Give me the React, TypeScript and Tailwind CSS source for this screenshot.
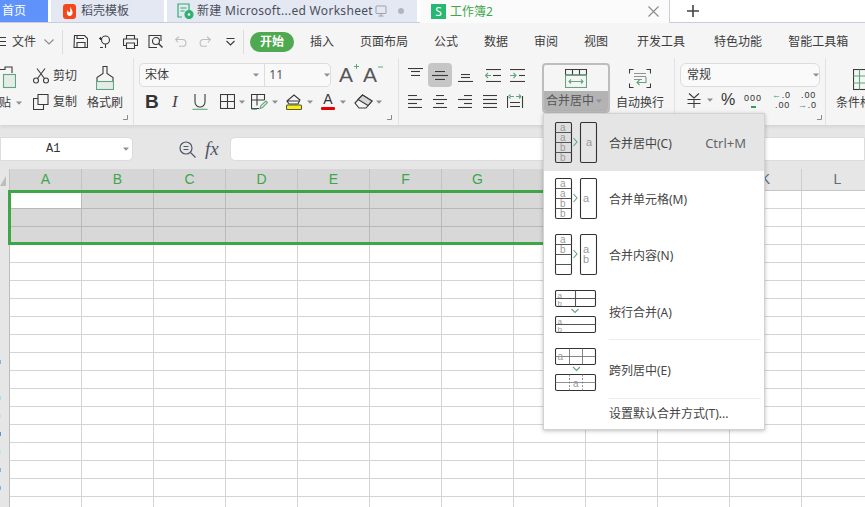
import React from "react";

const S = ({ w, h, children, className = "" }: { w: number; h: number; children?: React.ReactNode; className?: string }) => (
  <svg width={w} height={h} viewBox={`0 0 ${w} ${h}`} fill="none" stroke="#3a3a3a" strokeWidth={1.1} className={"shrink-0 block " + className}>
    {children}
  </svg>
);

const Caret = ({ className = "" }: { className?: string }) => (
  <svg width={6} height={4} viewBox="0 0 6 4" className={"shrink-0 block " + className}>
    <path d="M0 0.5h6L3 3.8z" fill="#8f8f8f" />
  </svg>
);

const Corner = () => (
  <svg width={5} height={5} viewBox="0 0 5 5" className="block">
    <path d="M4.5 0v4.5H0" fill="none" stroke="#8a8a8a" />
  </svg>
);

const Lines = ({ rows }: { rows: [number, number, number][] }) => (
  <>
    {rows.map(([x1, x2, y], i) => (
      <path key={i} d={`M${x1} ${y}H${x2}`} />
    ))}
  </>
);

const G = "#5fa67c";

function Tabs() {
  return (
    <div className="h-[23px] flex bg-white shrink-0 text-[12px] text-[#4a4f5c]">
      <div className="w-[48px] bg-[#6092fc] text-white pl-[2px] flex items-center border-b border-[#c8cedd]">首页</div>
      <div className="w-[3px] border-b border-[#c8cedd]" />
      <div className="w-[113px] bg-[#e4e8f2] flex items-center border-b border-[#c8cedd] pl-[12px]">
        <svg width={14} height={15} viewBox="0 0 14 15" className="shrink-0 block">
          <rect width={13} height={15} rx={3} fill="#f4481b" />
          <path d="M7.5 2.5C8 5.5 10 6.5 9.5 9.5C9 12 6 13 4.5 11C3.2 9.2 4 7 5 6C5 8 6 8.7 6.8 8.2C7.8 7.2 6.8 5 7.5 2.5z" fill="#fff" />
        </svg>
        <span className="ml-[4px]">稻壳模板</span>
      </div>
      <div className="w-[3px] border-b border-[#c8cedd]" />
      <div className="w-[250px] bg-[#e4e8f2] flex items-center border-b border-[#c8cedd] pl-[10px]">
        <svg width={17} height={16} viewBox="0 0 17 16" fill="none" stroke="#2db06f" strokeWidth={1.2} className="shrink-0 block">
          <path d="M5 14H1V1h11v6" />
          <path d="M3.5 5h6M3.5 8h4" />
          <circle cx={12} cy={11.5} r={4} fill="#2db06f" />
          <circle cx={12} cy={11.5} r={1.3} fill="#fff" stroke="none" />
        </svg>
        <span className="ml-[3px] whitespace-nowrap w-[178px] tracking-[0.3px]">新建 Microsoft...ed Worksheet</span>
        <svg width={12} height={12} viewBox="0 0 12 12" fill="none" stroke="#9aa0ad" className="shrink-0 block">
          <rect x={1} y={1} width={10} height={7.5} rx={0.5} />
          <path d="M6 8.5V11M3.5 11h5" />
        </svg>
        <span className="ml-[11px] w-[6px] h-[6px] rounded-full bg-[#b1b5bf]" />
      </div>
      <div className="w-[3px] border-b border-[#c8cedd]" />
      <div className="w-[250px] bg-[#fbfbfb] flex items-center pl-[11px] border-r border-[#c8cedd]">
        <div className="w-[15px] h-[15px] bg-[#27b873] text-white text-[12px] leading-[15px] text-center shrink-0">S</div>
        <span className="ml-[4px] text-[#3fa64e] text-[12px]">工作簿2</span>
        <svg width={11} height={11} viewBox="0 0 11 11" stroke="#8a8a8a" strokeWidth={1.1} className="ml-auto mr-[10px] block">
          <path d="M0.5 0.5l10 10M10.5 0.5l-10 10" />
        </svg>
      </div>
      <div className="flex-1 border-b border-[#c8cedd] pl-[17px] flex items-center">
        <svg width={12} height={12} viewBox="0 0 12 12" stroke="#444" strokeWidth={1.6} className="block">
          <path d="M6 0v12M0 6h12" />
        </svg>
      </div>
    </div>
  );
}

function MenuRow() {
  return (
    <div className="h-[35px] pt-[2px] bg-[#f5f5f5] flex items-center shrink-0 text-[12px] text-[#3c3c3c] whitespace-nowrap">
      <S w={6} h={9} className="ml-0">
        <path d="M0 0.5h6M0 4.5h6M0 8.5h6" />
      </S>
      <span className="ml-[6px] w-[24px]">文件</span>
      <S w={10} h={6} className="ml-[8px]">
        <path d="M0.5 0.5l4.5 4.5l4.5-4.5" stroke="#8b8b8b" />
      </S>
      <div className="ml-[8px] w-px h-[24px] bg-[#dcdcdc]" />
      <S w={15} h={14} className="ml-[10px]">
        <path d="M1.5 0.5h10l3 3v9h-13.500z M4 13V7.500h8V13 M4 0.500v3h7" />
      </S>
      <S w={14} h={14} className="ml-[10px]">
        <circle cx={7.5} cy={5} r={4} />
        <path d="M1 3.500h3M2.500 2v3M5 12.500h-3M7.500 9v4" />
      </S>
      <S w={15} h={14} className="ml-[11px]">
        <path d="M3.500 4V0.500h8V4M3.500 10.500H0.500V4h14v6.500h-3M3.500 8h8v5.500h-8z" />
      </S>
      <S w={16} h={14} className="ml-[10px]">
        <path d="M9 12.500H1V0.500h12V6" />
        <circle cx={8} cy={6} r={3.500} />
        <path d="M10.500 8.500l4 4" strokeWidth={1.5} />
      </S>
      <S w={12} h={11} className="ml-[11px]">
        <path d="M3 6.500L0.700 3.500L4 0.700M1 3.500h6.500a3.200 3.200 0 0 1 0 6.800H4" stroke="#bdbdbd" />
      </S>
      <S w={12} h={11} className="ml-[12px]">
        <path d="M9 6.500L11.300 3.500L8 0.700M11 3.500H4.500a3.200 3.200 0 0 0 0 6.800H8" stroke="#bdbdbd" />
      </S>
      <S w={9} h={8} className="ml-[15px]">
        <path d="M0.500 0.500h8M0.500 3l4 4l4-4" />
      </S>
      <div className="ml-[8px] w-px h-[24px] bg-[#dcdcdc]" />
      <div className="ml-[6px] w-[44px] h-[20px] rounded-full bg-[#4ea950] text-white font-bold text-[12px] leading-[20px] text-center">开始</div>
      <span className="ml-[16px]">插入</span>
      <span className="ml-[26px]">页面布局</span>
      <span className="ml-[26px]">公式</span>
      <span className="ml-[26px]">数据</span>
      <span className="ml-[26px]">审阅</span>
      <span className="ml-[26px]">视图</span>
      <span className="ml-[29px]">开发工具</span>
      <span className="ml-[29px]">特色功能</span>
      <span className="ml-[26px]">智能工具箱</span>
    </div>
  );
}

function Clipboard() {
  return (
    <div className="w-[134px] shrink-0 border-r border-[#e2e2e2] relative flex">
      <div className="w-[33px] shrink-0 pt-[8px]">
        <S w={16} h={24}>
          <path d="M-1 9V3.500h6V1h7v6" />
          <rect x={3.500} y={8.500} width={12} height={13} fill="#e4ece7" stroke={G} />
        </S>
        <div className="mt-[5px] flex items-center h-[16px]">
          <span className="w-[11px] overflow-hidden flex justify-end whitespace-nowrap">贴</span>
          <Caret className="ml-[5px]" />
        </div>
      </div>
      <div className="w-[54px] shrink-0 pt-[9px]">
        <div className="flex items-center h-[18px]">
          <S w={16} h={16}>
            <circle cx={3} cy={12.500} r={2.500} />
            <circle cx={13} cy={12.500} r={2.500} />
            <path d="M4.500 10.500L12 0.500M11.500 10.500L4 0.500" />
          </S>
          <span className="ml-[4px]">剪切</span>
        </div>
        <div className="mt-[8px] flex items-center h-[18px]">
          <S w={16} h={16}>
            <path d="M5 0.500h10v10H5zM5 4.500H0.500v11h10V10.500" />
          </S>
          <span className="ml-[4px]">复制</span>
        </div>
      </div>
      <div className="pt-[8px]">
        <S w={18} h={24} className="ml-[9px]">
          <path d="M7 0.500h4v7l6 4v4H1v-4l6-4z" />
          <rect x={0.500} y={15.500} width={17} height={8} fill="#e4ece7" stroke={G} />
        </S>
        <div className="mt-[5px] h-[16px] leading-[16px]">格式刷</div>
      </div>
      <div className="absolute right-[5px] bottom-[5px]"><Corner /></div>
    </div>
  );
}

function FontGroup() {
  return (
    <div className="w-[265px] shrink-0 border-r border-[#e2e2e2] relative pt-[5px] pl-[5px]">
      <div className="flex items-center">
        <div className="w-[192px] h-[24px] border border-[#dcdcdc] rounded-[5px] bg-[#f9f9f9] flex items-center">
          <span className="ml-[5px] w-[109px]">宋体</span>
          <Caret />
          <div className="ml-[5px] w-px h-[22px] bg-[#dcdcdc]" />
          <span className="ml-[4px] w-[55px] text-[#555]">11</span>
          <Caret />
        </div>
        <div className="ml-[8px] relative w-[16px] h-[20px] text-[21px] leading-[20px] text-[#555] font-['Liberation_Sans']">
          A
          <svg width={5} height={5} viewBox="0 0 5 5" stroke={G} className="absolute right-[-4px] top-[-1px] block"><path d="M0 2.500h5M2.500 0v5" /></svg>
        </div>
        <div className="ml-[8px] relative w-[16px] h-[20px] text-[21px] leading-[20px] text-[#555] font-['Liberation_Sans']">
          A
          <svg width={5} height={2} viewBox="0 0 5 2" stroke={G} className="absolute right-[-4px] top-[1px] block"><path d="M0 1h5" /></svg>
        </div>
      </div>
      <div className="flex items-center mt-[3px] h-[23px]">
        <span className="ml-[6px] w-[15px] text-[19px] font-bold text-[#333] font-['Liberation_Sans'] leading-[20px]">B</span>
        <span className="ml-[12px] w-[10px] text-[17px] italic text-[#444] font-['Liberation_Serif'] leading-[20px]">I</span>
        <S w={16} h={16} className="ml-[10px]">
          <path d="M3 0v8a5 5 0 0 0 10 0V0" />
          <path d="M0.500 15.300h15" stroke={G} />
        </S>
        <S w={15} h={15} className="ml-[12px]">
          <rect x={0.500} y={0.500} width={14} height={14} />
          <path d="M7.500 0.500v14M0.500 7.500h14" />
        </S>
        <Caret className="ml-[4px]" />
        <S w={17} h={16} className="ml-[6px]">
          <path d="M8 14.500H0.500V0.500h13V6M6 0.500v11M0.500 6h13" />
          <path d="M0.500 15.300H6" stroke={G} />
          <path d="M9 14.500l1-3l5-4.500l1.500 1.500l-5 5z" stroke={G} />
        </S>
        <Caret className="ml-[4px]" />
        <S w={18} h={17} className="ml-[8px]">
          <path d="M1 8l7-6l6 5l-2 4H3zM1 8h13" />
          <rect x={0.500} y={12} width={15} height={4.500} rx={1} fill="#fff200" stroke="#555" />
        </S>
        <Caret className="ml-[3px]" />
        <div className="ml-[8px] w-[14px] flex flex-col items-center">
          <span className="text-[14px] leading-[13px] text-[#333] font-['Liberation_Sans']">A</span>
          <span className="w-[14px] h-[3px] bg-[#e60000] rounded-[1px] mt-[1px]" />
        </div>
        <Caret className="ml-[5px]" />
        <S w={20} h={15} className="ml-[8px]">
          <path d="M1 9l7.500-8l9.500 6l-6 7H5z" />
          <path d="M8.500 1l9.500 6l-4 4.500L4 5.500z" fill="#d6d6d6" />
        </S>
        <Caret className="ml-[2px]" />
      </div>
      <div className="absolute right-[6px] bottom-[5px]"><Corner /></div>
    </div>
  );
}

function AlignGroup() {
  return (
    <div className="w-[143px] shrink-0 pt-[5px] pl-[9px]">
      <div className="flex items-center h-[24px]">
        <S w={15} h={8} className="mb-[6px]">
          <Lines rows={[[0, 15, 0.5], [3, 12, 3.5], [3, 12, 7.5]]} />
        </S>
        <div className="ml-[5px] w-[24px] h-[24px] rounded-[4px] bg-[#c6c6c6] flex items-center justify-center">
          <S w={16} h={9}>
            <Lines rows={[[3, 13, 0.5], [0, 16, 4.5], [3, 13, 8.5]]} />
          </S>
        </div>
        <S w={15} h={8} className="ml-[6px] mt-[6px]">
          <Lines rows={[[3, 12, 0.5], [3, 12, 3.5], [0, 15, 7.5]]} />
        </S>
        <S w={16} h={13} className="ml-[12px]">
          <Lines rows={[[1, 16, 0.5], [8, 16, 6.5], [1, 16, 12.5]]} />
          <path d="M6 6.500H0.500M3 4l-2.500 2.500L3 9" stroke={G} />
        </S>
        <S w={16} h={13} className="ml-[9px]">
          <Lines rows={[[0, 15, 0.5], [9, 15, 6.5], [0, 15, 12.5]]} />
          <path d="M0 6.500h6M3.500 4L6 6.500L3.500 9" stroke={G} />
        </S>
      </div>
      <div className="flex items-center h-[24px] mt-[2px]">
        <S w={15} h={13}>
          <Lines rows={[[0, 9, 0.5], [0, 14, 4.5], [0, 9, 8.5], [0, 14, 12.5]]} />
        </S>
        <S w={15} h={13} className="ml-[10px]">
          <Lines rows={[[3, 11, 0.5], [0, 14, 4.5], [3, 11, 8.5], [0, 14, 12.5]]} />
        </S>
        <S w={15} h={13} className="ml-[10px]">
          <Lines rows={[[6, 14, 0.5], [0, 14, 4.5], [6, 14, 8.5], [0, 14, 12.5]]} />
        </S>
        <S w={15} h={13} className="ml-[10px]">
          <Lines rows={[[0, 14, 0.5], [0, 14, 4.5], [0, 14, 8.5], [0, 14, 12.5]]} />
        </S>
        <S w={17} h={14} className="ml-[9px]">
          <path d="M0.500 2v12M15.500 2v12M3 8.500h10M3 12.500h10" />
          <path d="M3 2.500h4M1.500 2.500L3.500 0.500M1.500 2.500L3.500 4.500M9 2.500h5M14 2.500L12 0.500M14 2.500L12 4.500" stroke={G} />
        </S>
      </div>
    </div>
  );
}

function MergeGroup() {
  return (
    <div className="w-[133px] shrink-0 flex border-r border-[#e2e2e2] relative">
      <div className="w-[68px] h-[50px] mt-[5px] border-2 border-[#bdbdbd] rounded-[4px] flex flex-col overflow-hidden shrink-0">
        <div className="h-[26px] flex justify-center items-center">
          <S w={22} h={19}>
            <path d="M0.500 0.500h21v5.500H0.500zM7.500 0.500v5.500M14.500 0.500v5.500" />
            <rect x={0.500} y={6} width={21} height={12.500} stroke={G} />
            <path d="M4 12.500h14M6 10.500l-2 2l2 2M16 10.500l2 2l-2 2" stroke={G} />
          </S>
        </div>
        <div className="flex-1 bg-[#b3b3b3] flex items-center pl-[2px] text-[#555]">
          <span className="w-[50px]">合并居中</span>
          <Caret />
        </div>
      </div>
      <div className="ml-[6px] w-[48px] pt-[11px] flex flex-col items-center shrink-0">
        <S w={22} h={19}>
          <path d="M4.500 0.500H0.500v4M17.500 0.500h4v4M4.500 18.500H0.500v-4M17.500 18.500h4v-4" />
          <path d="M5 4.500h12M5 7.500h12M5 10.500h8" strokeWidth={0.8} stroke="#777" />
          <path d="M17 8v5.500H8M10.500 11l-2.500 2.500L10.500 16" stroke={G} />
        </S>
        <span className="mt-[6px] whitespace-nowrap">自动换行</span>
      </div>
    </div>
  );
}

function NumberGroup() {
  return (
    <div className="w-[151px] shrink-0 border-r border-[#e2e2e2] relative pt-[5px] pl-[5px]">
      <div className="w-[140px] h-[24px] border border-[#dcdcdc] rounded-[6px] bg-[#fafafa] flex items-center">
        <span className="ml-[6px] w-[126px]">常规</span>
        <Caret />
      </div>
      <div className="flex items-center h-[24px] mt-[1px] text-[#333] font-['Liberation_Sans']">
        <S w={14} h={15} className="ml-[7px]">
          <path d="M2 0.500L7 5l5-4.500M0.500 6.500h13M0.500 10.500h13M7 6v9" />
        </S>
        <Caret className="ml-[6px]" />
        <span className="ml-[8px] w-[14px] text-[16px] leading-[16px]">%</span>
        <div className="ml-[9px] w-[18px] text-[9px] leading-[10px] tracking-[1px] text-center">
          000
          <div className="h-[5px] w-[5px] mx-auto border-b-2 border-[#3e9a5c]" />
        </div>
        <div className="ml-[10px] w-[18px] text-[9px] leading-[10px] tracking-[0.8px]">
          <div className="flex items-center"><span className="text-[#3e9a5c]">←</span>.0</div>
          <div className="text-right">.00</div>
        </div>
        <div className="ml-[8px] w-[18px] text-[9px] leading-[10px] tracking-[0.8px]">
          <div className="text-right">.00</div>
          <div className="flex items-center"><span className="text-[#3e9a5c]">→</span>.0</div>
        </div>
      </div>
      <div className="absolute right-[3px] bottom-[5px]"><Corner /></div>
    </div>
  );
}

function Cond() {
  return (
    <div className="pl-[10px] pt-[11px] whitespace-nowrap w-[39px] overflow-hidden shrink-0">
      <S w={30} h={22} className="ml-[17px]">
        <rect x={0.500} y={0.500} width={26} height={20} />
        <path d="M6.500 0.500v20M13.500 0.500v20M0.500 7h26M0.500 14h26" stroke={G} />
      </S>
      <div className="mt-[3px]">条件格</div>
    </div>
  );
}

function Ribbon() {
  return (
    <div className="h-[67px] bg-[#f5f5f5] flex shrink-0 text-[12px] text-[#3c3c3c] shadow-[0_2px_3px_rgba(0,0,0,0.08)] relative">
      <Clipboard />
      <FontGroup />
      <AlignGroup />
      <MergeGroup />
      <NumberGroup />
      <Cond />
    </div>
  );
}

function Formula() {
  return (
    <div className="h-[44px] bg-[#e6e6e6] flex items-center shrink-0 pb-[8px] pt-[12px]">
      <div className="w-[133px] h-[24px] bg-white border border-[#dcdcdc] rounded-r-[5px] flex items-center shrink-0">
        <span className="ml-[45px] w-[77px] text-[12px] font-['Liberation_Mono'] text-[#333]">A1</span>
        <Caret />
      </div>
      <svg width={17} height={17} viewBox="0 0 17 17" fill="none" stroke="#4f5666" strokeWidth={1.2} className="ml-[46px] block shrink-0">
        <circle cx={7} cy={7} r={6} />
        <path d="M11.500 11.500l5 5M4.500 5.500h5M4.500 8.500h5" />
      </svg>
      <span className="ml-[9px] w-[25px] text-[19px] italic font-['Liberation_Serif'] text-[#4f5666] shrink-0">fx</span>
      <div className="flex-1 h-[24px] bg-white border border-[#dcdcdc] rounded-l-[5px]" />
    </div>
  );
}

const COLS = ["A", "B", "C", "D", "E", "F", "G", "H", "I", "J", "K", "L"];
const SPECK: Record<number, string> = { 9: "bg-[#7fb6ea]", 11: "bg-[#a8def0]", 12: "bg-[#b9e8f0]", 13: "bg-[#5f95d8]", 14: "bg-[#b9e8f0]", 15: "bg-[#7fb6ea]", 16: "bg-[#7fb6ea]" };

function Grid() {
  return (
    <div className="flex-1 relative overflow-hidden bg-white">
      <div className="flex h-[22px] bg-[#e6e6e6]">
        <div className="w-[10px] shrink-0 border-r border-[#c4c4c4] flex items-end pb-[5px]">
          <svg width={6} height={10} viewBox="0 0 6 10" className="block"><path d="M6 0v10H0z" fill="#bdbdbd" /></svg>
        </div>
        {COLS.map((c, i) => (
          <div
            key={c}
            className={
              i < 10
                ? "w-[72px] shrink-0 bg-[#d6d6d6] border-r border-[#c4c4c4] text-[#3fa64e] text-[14px] leading-[21px] text-center font-['Liberation_Sans']"
                : "w-[72px] shrink-0 border-r border-[#cdcdcd] border-b border-b-[#c6c6c6] text-[#5f6d7e] text-[14px] leading-[21px] text-center font-['Liberation_Sans']"
            }
          >
            {c}
          </div>
        ))}
      </div>
      {Array.from({ length: 18 }).map((_, r) => (
        <div key={r} className="flex h-[18px]">
          <div className="w-[10px] shrink-0 bg-[#e6e6e6] border-r border-[#bdbdbd] flex items-center">
            {SPECK[r] ? <span className={"w-[1px] h-[4px] block " + SPECK[r]} /> : null}
          </div>
          {COLS.map((c, i) => (
            <div
              key={c}
              className={
                r < 3 && i < 10
                  ? r === 0 && i === 0
                    ? "w-[72px] shrink-0 bg-white border-r border-b border-[#b8b8b8]"
                    : "w-[72px] shrink-0 bg-[#d8d8d8] border-r border-b border-[#b8b8b8]"
                  : "w-[72px] shrink-0 border-r border-b border-[#d4d4d4]"
              }
            />
          ))}
        </div>
      ))}
      <div className="absolute left-[8px] top-[21px] w-[722px] h-[55px] border-[3px] border-[#3fa648] pointer-events-none" />
    </div>
  );
}

const Tx = ({ x, y, size = 10, children }: { x: number; y: number; size?: number; children: React.ReactNode }) => (
  <text x={x} y={y} fontSize={size} fill="#9a9a9a" stroke="none" fontFamily="Liberation Sans">{children}</text>
);

const Chev = ({ x, y }: { x: number; y: number }) => (
  <path d={`M${x} ${y - 4}l3.500 4l-3.500 4`} stroke={G} />
);
const ChevD = ({ x, y }: { x: number; y: number }) => (
  <path d={`M${x} ${y}l3.500 3.500l3.500-3.500`} stroke={G} />
);

const Stack = ({ labels, fill }: { labels: string[]; fill?: boolean }) => (
  <>
    <rect x={1.500} y={0.500} width={16} height={40} rx={1.500} fill={fill ? "#dedede" : "none"} stroke="#333" />
    <path d="M1.500 10.500h16M1.500 20.500h16M1.500 30.500h16" stroke="#555" />
    {labels.map((l, i) => (
      <Tx key={i} x={6} y={8.500 + i * 10}>{l}</Tx>
    ))}
  </>
);

function Ic1() {
  return (
    <S w={44} h={42}>
      <Stack labels={["a", "a", "b", "b"]} fill />
      <Chev x={19.500} y={20} />
      <rect x={26.500} y={0.500} width={16} height={40} rx={1.500} stroke="#333" />
      <Tx x={32} y={24} size={11}>a</Tx>
    </S>
  );
}
function Ic2() {
  return (
    <S w={44} h={42}>
      <Stack labels={["a", "a", "b", "b"]} />
      <Chev x={19.500} y={20} />
      <rect x={26.500} y={0.500} width={16} height={40} rx={1.500} stroke="#333" />
      <Tx x={29} y={24} size={11}>a</Tx>
    </S>
  );
}
function Ic3() {
  return (
    <S w={44} h={42}>
      <Stack labels={["a", "b"]} />
      <Chev x={19.500} y={20} />
      <rect x={26.500} y={0.500} width={16} height={40} rx={1.500} stroke="#333" />
      <Tx x={29} y={19} size={11}>a</Tx>
      <Tx x={29} y={29} size={11}>b</Tx>
    </S>
  );
}
function Ic4() {
  return (
    <S w={42} h={44} className="ml-[1px]">
      <rect x={0.500} y={0.500} width={40} height={16} rx={1.500} stroke="#333" />
      <path d="M0.500 8.500h40M20.500 0.500v16" stroke="#555" />
      <Tx x={2.500} y={7.500} size={8}>a</Tx>
      <Tx x={2.500} y={15.500} size={8}>b</Tx>
      <ChevD x={16.500} y={19} />
      <rect x={0.500} y={26.500} width={40} height={16} rx={1.500} stroke="#333" />
      <path d="M0.500 34.500h40" stroke="#555" />
      <Tx x={2.500} y={33.500} size={8}>a</Tx>
      <Tx x={2.500} y={41.500} size={8}>b</Tx>
    </S>
  );
}
function Ic5() {
  return (
    <S w={42} h={44} className="ml-[1px]">
      <rect x={0.500} y={0.500} width={40} height={16} rx={1.500} stroke="#333" />
      <path d="M14.500 0.500v16M27.500 0.500v16M0.500 8.500h40" stroke="#666" strokeWidth={0.8} />
      <Tx x={2.500} y={12}>a</Tx>
      <ChevD x={18} y={19} />
      <rect x={0.500} y={26.500} width={40} height={16} rx={1.500} stroke="#333" />
      <path d="M0.500 34.500h40" stroke="#777" strokeWidth={0.8} />
      <path d="M14.500 26.500v16M27.500 26.500v16" stroke="#777" strokeWidth={0.8} strokeDasharray="2 1.500" />
      <Tx x={18} y={39}>a</Tx>
    </S>
  );
}

function Item({ icon, label, short, active, divider, h }: { icon: React.ReactNode; label: string; short?: string; active?: boolean; divider?: boolean; h: string }) {
  return (
    <div className={(active ? "bg-[#e5e5e5] " : "") + h + " relative flex items-center pl-[10px] pr-[18px]"}>
      <div className="w-[55px] shrink-0">{icon}</div>
      <span className="text-[#444] whitespace-nowrap mt-[2px]">{label}</span>
      {short ? <span className="ml-auto mt-[2px] text-[#666] text-[13px] font-['Noto_Sans']">{short}</span> : null}
      {divider ? <div className="absolute left-[65px] right-[3px] bottom-0 h-px bg-[#ececec]" /> : null}
    </div>
  );
}

function Dropdown() {
  return (
    <div className="absolute left-[543px] top-[113px] w-[222px] h-[317px] bg-white border border-[#d2d2d2] shadow-[0_1px_4px_rgba(0,0,0,0.25)] text-[12px] font-['Noto_Sans','Noto_Sans_CJK_SC',sans-serif]">
      <Item h="h-[57px]" active icon={<Ic1 />} label="合并居中(C)" short="Ctrl+M" />
      <Item h="h-[56px]" icon={<Ic2 />} label="合并单元格(M)" />
      <Item h="h-[56px]" icon={<Ic3 />} label="合并内容(N)" />
      <Item h="h-[57px]" divider icon={<Ic4 />} label="按行合并(A)" />
      <Item h="h-[59px]" divider icon={<Ic5 />} label="跨列居中(E)" />
      <div className="h-[30px] pl-[65px] flex items-center text-[#444] whitespace-nowrap">设置默认合并方式(T)...</div>
    </div>
  );
}

export default function App() {
  return (
    <div className="w-[865px] h-[507px] overflow-hidden flex flex-col relative bg-white font-['Noto_Sans','Noto_Sans_CJK_SC',sans-serif]">
      <Tabs />
      <MenuRow />
      <Ribbon />
      <Formula />
      <Grid />
      <Dropdown />
    </div>
  );
}
